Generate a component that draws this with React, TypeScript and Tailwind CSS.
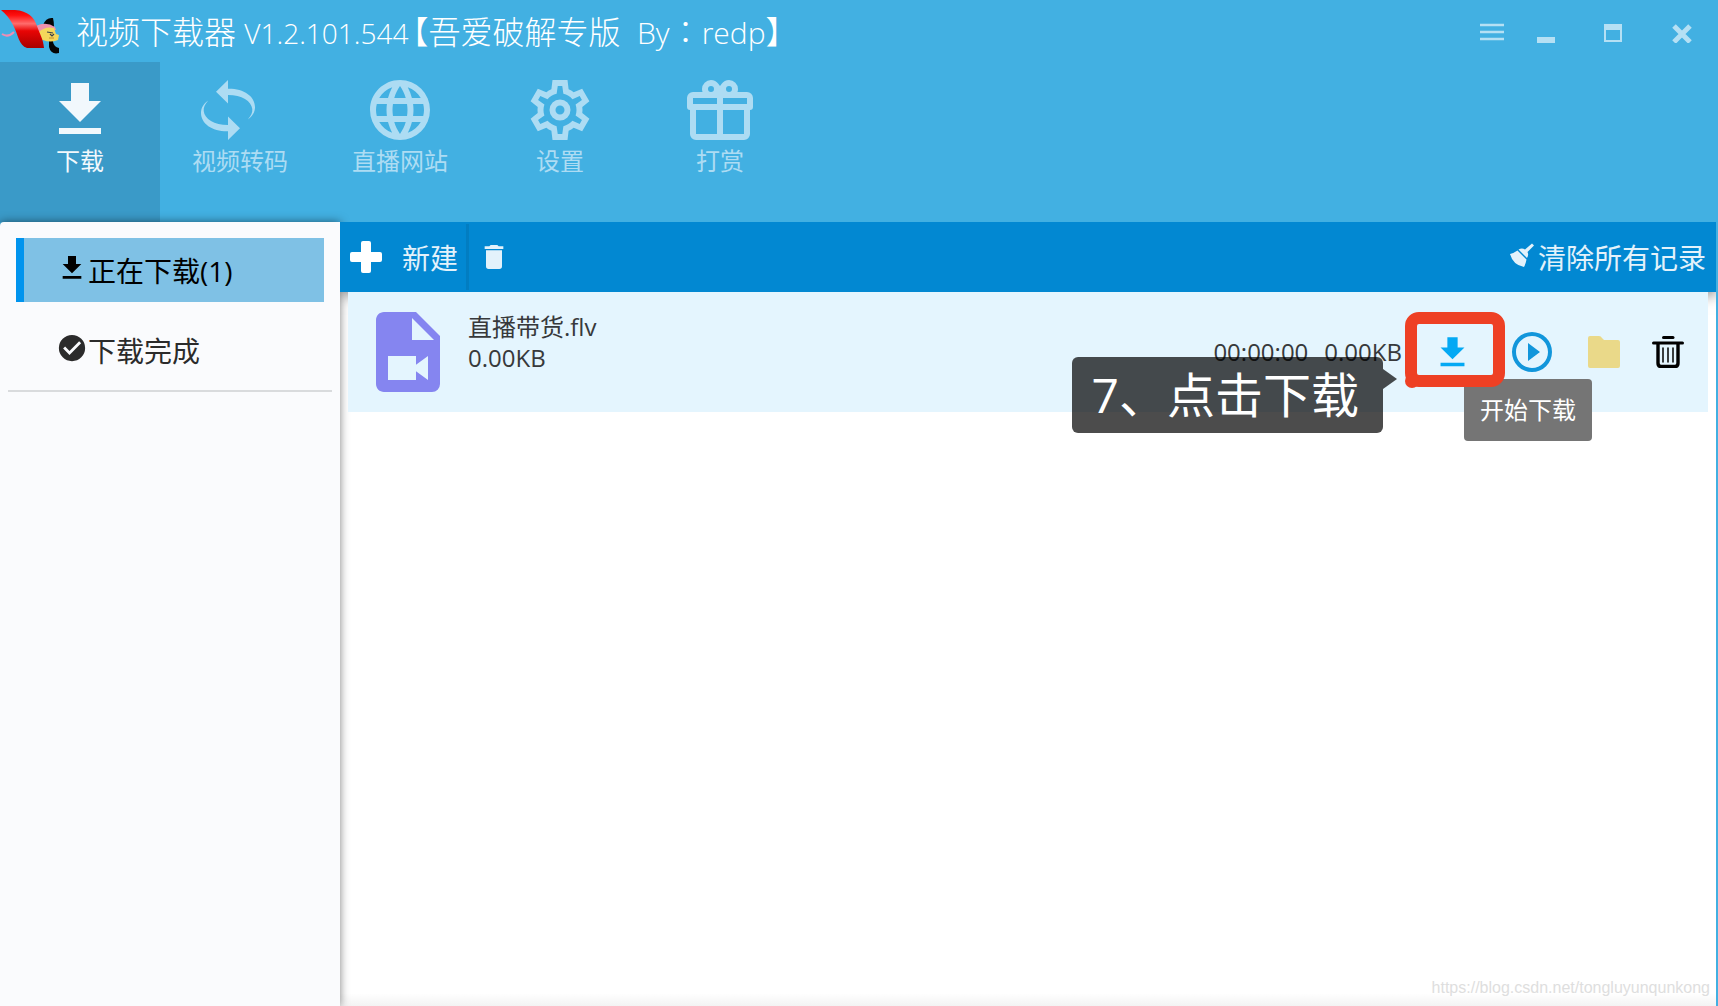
import type { ReactNode } from "react";

const PATHS = {
  download: "M5,20H19V18H5M19,9H15V3H9V9H5L12,16L19,9Z",
  web: "M16.36,14C16.44,13.34 16.5,12.68 16.5,12C16.5,11.32 16.44,10.66 16.36,10H19.74C19.9,10.64 20,11.31 20,12C20,12.69 19.9,13.36 19.74,14M14.59,19.56C15.19,18.45 15.65,17.25 15.97,16H18.92C17.96,17.65 16.43,18.93 14.59,19.56M14.34,14H9.66C9.56,13.34 9.5,12.68 9.5,12C9.5,11.32 9.56,10.65 9.66,10H14.34C14.43,10.65 14.5,11.32 14.5,12C14.5,12.68 14.43,13.34 14.34,14M12,19.96C11.17,18.76 10.5,17.43 10.09,16H13.91C13.5,17.43 12.83,18.76 12,19.96M8,8H5.08C6.03,6.34 7.57,5.06 9.4,4.44C8.8,5.55 8.35,6.75 8,8M5.08,16H8C8.35,17.25 8.8,18.45 9.4,19.56C7.57,18.93 6.03,17.65 5.08,16M4.26,14C4.1,13.36 4,12.69 4,12C4,11.31 4.1,10.64 4.26,10H7.64C7.56,10.66 7.5,11.32 7.5,12C7.5,12.68 7.56,13.34 7.64,14M12,4.03C12.83,5.23 13.5,6.57 13.91,8H10.09C10.5,6.57 11.17,5.23 12,4.03M18.92,8H15.97C15.65,6.75 15.19,5.55 14.59,4.44C16.43,5.07 17.96,6.34 18.92,8M12,2C6.47,2 2,6.5 2,12A10,10 0 0,0 12,22A10,10 0 0,0 22,12A10,10 0 0,0 12,2Z",
  cog: "M12,8.5A3.5,3.5 0 0,1 15.5,12A3.5,3.5 0 0,1 12,15.5A3.5,3.5 0 0,1 8.5,12A3.5,3.5 0 0,1 12,8.5M12,10.5A1.5,1.5 0 0,0 10.5,12A1.5,1.5 0 0,0 12,13.5A1.5,1.5 0 0,0 13.5,12A1.5,1.5 0 0,0 12,10.5M9.5,22L9.13,18.93C8.5,18.68 7.96,18.34 7.44,17.94L4.6,19.1L2.2,14.9L4.57,12.97L4.5,12L4.57,11L2.2,9.1L4.6,4.9L7.44,6.05C7.96,5.66 8.5,5.32 9.13,5.07L9.5,2H14.5L14.87,5.07C15.5,5.32 16.04,5.66 16.56,6.05L19.4,4.9L21.8,9.1L19.43,11L19.5,12L19.43,13L21.8,14.9L19.4,19.1L16.56,17.95C16.04,18.34 15.5,18.68 14.87,18.93L14.5,22H9.5M11.25,4L10.88,6.61C9.68,6.86 8.62,7.5 7.85,8.39L5.44,7.35L4.69,8.65L6.8,10.2C6.4,11.37 6.4,12.64 6.8,13.8L4.68,15.36L5.43,16.66L7.86,15.62C8.63,16.5 9.68,17.14 10.87,17.38L11.24,20H12.76L13.13,17.39C14.32,17.14 15.37,16.5 16.14,15.62L18.57,16.66L19.32,15.36L17.2,13.81C17.6,12.64 17.6,11.37 17.2,10.2L19.31,8.65L18.56,7.35L16.15,8.39C15.38,7.5 14.32,6.86 13.12,6.62L12.75,4H11.25Z",
  gift: "M22,12V20A2,2 0 0,1 20,22H4A2,2 0 0,1 2,20V12A1,1 0 0,1 1,11V8A2,2 0 0,1 3,6H6.17C6.06,5.69 6,5.35 6,5A3,3 0 0,1 9,2C10,2 10.88,2.5 11.43,3.24V3.23L12,4L12.57,3.23V3.24C13.12,2.5 14,2 15,2A3,3 0 0,1 18,5C18,5.35 17.94,5.69 17.83,6H21A2,2 0 0,1 23,8V11A1,1 0 0,1 22,12M4,20H11V12H4V20M20,20V12H13V20H20M9,4A1,1 0 0,0 8,5A1,1 0 0,0 9,6A1,1 0 0,0 10,5A1,1 0 0,0 9,4M15,4A1,1 0 0,0 14,5A1,1 0 0,0 15,6A1,1 0 0,0 16,5A1,1 0 0,0 15,4M3,8V10H11V8H3M13,8V10H21V8H13Z",
  sync: "M8 2V4.9C13.2 4.8 17 7.4 17 11C17 12.8 16.1 14.1 14.6 15.2C15.7 14 16.2 12.9 16.1 11.7C15.8 9 12.6 7 8 7V9.8L4 5.9ZM8 22V19.1C2.8 19.2 -1 16.6 -1 13C-1 11.2 -0.1 9.9 1.4 8.8C0.3 10 -0.2 11.1 -0.1 12.3C0.2 15 3.4 17 8 17V14.2L12 18.1Z",
  fileVideo: "M13,9H18.5L13,3.5V9M6,2H14L20,8V20A2,2 0 0,1 18,22H6C4.89,22 4,21.1 4,20V4C4,2.89 4.89,2 6,2M17,19V13L14,15.2V13H7V19H14V16.8L17,19Z",
  trash: "M19,4H15.5L14.5,3H9.5L8.5,4H5V6H19M6,19A2,2 0 0,0 8,21H16A2,2 0 0,0 18,19V7H6V19Z",
  play: "M12,20C7.59,20 4,16.41 4,12C4,7.59 7.59,4 12,4C16.41,4 20,7.59 20,12C20,16.41 16.41,20 12,20M12,2A10,10 0 0,0 2,12A10,10 0 0,0 12,22A10,10 0 0,0 22,12A10,10 0 0,0 12,2M10,16.5L16,12L10,7.5V16.5Z",
  check: "M12 1.5A10.5 10.5 0 1 0 12 22.5A10.5 10.5 0 1 0 12 1.5M10 17.5L4.9 12.4L6.5 10.8L10 14.3L17.7 6.6L19.3 8.2Z",
};

function Icon({ path, className }: { path: string; className: string }) {
  return (
    <svg viewBox="0 0 24 24" overflow="visible" className={className} fill="currentColor" fillRule="evenodd" aria-hidden="true">
      <path d={path} />
    </svg>
  );
}

function Logo() {
  return (
    <svg viewBox="0 0 60 56" className="h-14 w-15 shrink-0" aria-hidden="true">
      <defs>
        <linearGradient id="ribbon" x1="0" y1="0" x2="0" y2="1">
          <stop offset="0" stopColor="#e90000" />
          <stop offset="0.14" stopColor="#ff1010" />
          <stop offset="0.36" stopColor="#ff6c6c" />
          <stop offset="0.55" stopColor="#e80505" />
          <stop offset="1" stopColor="#a80000" />
        </linearGradient>
      </defs>
      <path d="M2 34Q8 38 14 32" fill="none" stroke="#ef8db4" strokeWidth="2" />
      <path d="M43 25Q46 17 53 18Q54 22 54 27L53 42Q54 47 59 48V53Q51 55 49 47V39L44 36Z" fill="#050505" />
      <path d="M36 26Q46 21 55 27L56 30L45 31L40 37Z" fill="#ee91ad" />
      <path d="M39 32Q45 26 54 28L56 34L59 35L58 40Q50 43 43 40L40 41Z" fill="#f3d75b" />
      <path d="M47 32L53 33M50 34L52 36L54 34" fill="none" stroke="#38404a" strokeWidth="1.2" />
      <path d="M49 38H54" stroke="#c08c2e" strokeWidth="1" />
      <path d="M1 10H15C28 11 34 17 37 26C40 35 43 38 44 48H27C19 46 18 34 13 25C10 19 6 14 1 10Z" fill="url(#ribbon)" />
    </svg>
  );
}

function NavTab({ path, label, active = false }: { path: string; label: string; active?: boolean }) {
  return (
    <button
      type="button"
      className={
        active
          ? "flex h-40 w-40 flex-col items-center bg-[#3a9ac8] pt-3 text-[#f1f8fc]"
          : "flex h-40 w-40 flex-col items-center pt-3 text-[#addcf3]"
      }
    >
      <Icon path={path} className="size-18" />
      <span className="-mt-1 text-2xl leading-[38px]">{label}</span>
    </button>
  );
}

function SideItem({ icon, label, active = false }: { icon: ReactNode; label: string; active?: boolean }) {
  return (
    <button
      type="button"
      className={
        active
          ? "flex h-16 w-full items-center border-l-8 border-[#0094ee] bg-[#7fc1e5] pl-8 text-black"
          : "flex h-16 w-full items-center border-l-8 border-transparent pl-8 text-[#2b2b2b]"
      }
    >
      <span className="mb-1 flex w-8 justify-center">{icon}</span>
      <span className="pt-[2px] text-[28px] leading-10">{label}</span>
    </button>
  );
}

function TitleBar() {
  return (
    <header className="flex h-[62px] items-start pr-[26px]">
      <Logo />
      <h1 className="ml-4 flex-1 pt-[2px] text-[32px] leading-14 font-light whitespace-pre text-white">
        视频下载器 <span className="text-[28px]">V1.2.101.544</span>
        <span className="ml-1 [font-feature-settings:'halt']">【</span>吾爱破解专版{"  "}
        <span className="text-[30px]">By</span>
        <span className="font-['Noto_Sans_CJK_TC',sans-serif]">：</span>
        <span className="text-[30px]">redp</span>
        <span className="[font-feature-settings:'halt']">】</span>
      </h1>
      <div className="flex h-[66px] items-center gap-8 text-[#b5e0f4]">
        <button type="button" aria-label="菜单">
          <svg viewBox="0 0 24 24" className="size-6" stroke="currentColor" strokeWidth="2.4">
            <path d="M0 4H24M0 11H24M0 18H24" />
          </svg>
        </button>
        <button type="button" aria-label="最小化">
          <svg viewBox="0 0 20 20" overflow="visible" className="size-5" fill="currentColor">
            <path d="M1 14H19V20H1Z" />
          </svg>
        </button>
        <button type="button" aria-label="最大化" className="ml-4">
          <svg viewBox="0 0 20 20" className="size-5" fill="currentColor" fillRule="evenodd">
            <path d="M0 1H18V19H0ZM2 7V17H16V7Z" />
          </svg>
        </button>
        <button type="button" aria-label="关闭" className="ml-4">
          <svg viewBox="0 0 20 20" className="size-5" stroke="currentColor" strokeWidth="5">
            <path d="M2 3L18 19M18 3L2 19" />
          </svg>
        </button>
      </div>
    </header>
  );
}

function Sidebar() {
  return (
    <aside className="relative z-10 w-85 shrink-0 rounded-tl-sm bg-[#fafbfd] px-2 pt-4 shadow-[0_0_10px_rgba(0,0,0,0.5)]">
      <nav className="flex flex-col gap-4 border-b-2 border-[#d9dbdd] px-2 pb-2">
        <SideItem active icon={<Icon path={PATHS.download} className="size-8" />} label="正在下载(1)" />
        <SideItem icon={<Icon path={PATHS.check} className="size-[30px]" />} label="下载完成" />
      </nav>
    </aside>
  );
}

function Toolbar() {
  return (
    <div className="relative z-20 flex h-[70px] items-center bg-[#0288d2] pr-[10px] pl-[10px] text-[28px] text-[#e3f2fb] shadow-[0_2px_14px_rgba(0,0,0,0.55)]">
      <button type="button" className="flex items-center gap-5">
        <svg viewBox="0 0 32 32" className="size-8" fill="white" aria-hidden="true">
          <rect x="11" width="10" height="32" rx="2" />
          <rect y="11" width="32" height="10" rx="2" />
        </svg>
        <span className="pt-[2px]">新建</span>
      </button>
      <div className="ml-2 h-[66px] w-[3px] bg-[#027dc1]" />
      <button type="button" aria-label="删除" className="ml-[9px]">
        <Icon path={PATHS.trash} className="size-8" />
      </button>
      <button type="button" className="ml-auto flex items-center gap-[3px]">
        <svg viewBox="0 0 26 26" className="mb-1 size-[26px]" fill="currentColor" aria-hidden="true">
          <path d="M23 1.5L25 3.5L18.5 10Q20 13 18 16L9.5 7.5Q13 5.5 16 7.5ZM8.5 8.5L17.5 17.5Q17 21 15 25Q4 23 1 12Q5 11 8.5 8.5Z" />
        </svg>
        <span className="pt-[2px]">清除所有记录</span>
      </button>
    </div>
  );
}

function Callout() {
  return (
    <div className="absolute top-[65px] right-[123px] z-10 rounded-md bg-black/70 pr-6 pl-5 text-5xl leading-[76px] whitespace-nowrap text-white">
      7、点击下载
      <svg viewBox="0 0 14 20" className="absolute top-3 left-full h-5 w-[14px]" aria-hidden="true">
        <path d="M0 0L14 10L0 20Z" fill="black" fillOpacity="0.7" />
      </svg>
    </div>
  );
}

function DownloadRow() {
  return (
    <li className="flex h-30 bg-[#e4f5fe] pr-6">
      <Icon path={PATHS.fileVideo} className="mt-3 ml-3 size-24 text-[#8585f0]" />
      <div className="ml-3 pt-[19px] text-2xl leading-[31px] text-[#37393b]">
        <p>直播带货.flv</p>
        <p>0.00KB</p>
      </div>
      <div className="ml-auto flex items-center text-2xl text-[#37393b]">
        <span>00:00:00</span>
        <span className="ml-4">0.00KB</span>
        <div className="relative flex h-30 w-[104px] items-center justify-center pr-1">
          <button type="button" aria-label="开始下载" className="text-[#03a9f4]">
            <Icon path={PATHS.download} className="size-[41px]" />
          </button>
          <svg viewBox="0 0 100 76" className="pointer-events-none absolute top-5 left-[3px] z-20 h-[76px] w-[100px]" aria-hidden="true">
            <rect x="6" y="6" width="88" height="63" rx="8" fill="none" stroke="#ee4024" strokeWidth="12" />
            <circle cx="7" cy="69" r="7" fill="#ee4024" />
          </svg>
          <Callout />
          <div role="tooltip" className="absolute top-[87px] left-[62px] z-10 rounded bg-[#757575] px-4 leading-[62px] whitespace-nowrap text-white">
            开始下载
          </div>
        </div>
        <button type="button" aria-label="播放" className="ml-[2px] text-[#1296db]">
          <Icon path={PATHS.play} className="size-12" />
        </button>
        <button type="button" aria-label="打开文件夹" className="ml-8">
          <svg viewBox="0 0 32 32" className="size-8" fill="#ead989" aria-hidden="true">
            <path d="M2 0H11Q13 0 14 2L16 4H30Q32 4 32 6V30Q32 32 30 32H2Q0 32 0 30V2Q0 0 2 0Z" />
          </svg>
        </button>
        <button type="button" aria-label="删除任务" className="ml-8 text-black">
          <svg viewBox="0 0 32 32" className="size-8" fill="none" stroke="currentColor" strokeLinecap="round" aria-hidden="true">
            <path d="M11.5 1.5H21" strokeWidth="3" />
            <path d="M1.5 7H30.5" strokeWidth="3" />
            <path d="M6 8V27Q6 30.5 9 30.5H23Q26 30.5 26 27V8" strokeWidth="3.4" />
            <path d="M11 12V26M16 12V26M21 12V26" strokeWidth="1.5" />
          </svg>
        </button>
      </div>
    </li>
  );
}

export default function App() {
  return (
    <div className="flex min-h-screen flex-col bg-[#42b0e2] font-['Open_Sans','Noto_Sans_CJK_SC',sans-serif]">
      <TitleBar />
      <nav className="flex">
        <NavTab active path={PATHS.download} label="下载" />
        <NavTab path={PATHS.sync} label="视频转码" />
        <NavTab path={PATHS.web} label="直播网站" />
        <NavTab path={PATHS.cog} label="设置" />
        <NavTab path={PATHS.gift} label="打赏" />
      </nav>
      <div className="flex flex-1 pr-[2px]">
        <Sidebar />
        <main className="flex flex-1 flex-col overflow-hidden bg-white">
          <Toolbar />
          <ul className="relative z-20 px-2">
            <DownloadRow />
          </ul>
          <footer className="mt-auto bg-linear-to-t from-[#f3f3f3] to-white to-40% pr-[6px] pb-1 text-right font-['Liberation_Sans',sans-serif] text-base leading-7 text-[#dedede]">
            https://blog.csdn.net/tongluyunqunkong
          </footer>
        </main>
      </div>
    </div>
  );
}
